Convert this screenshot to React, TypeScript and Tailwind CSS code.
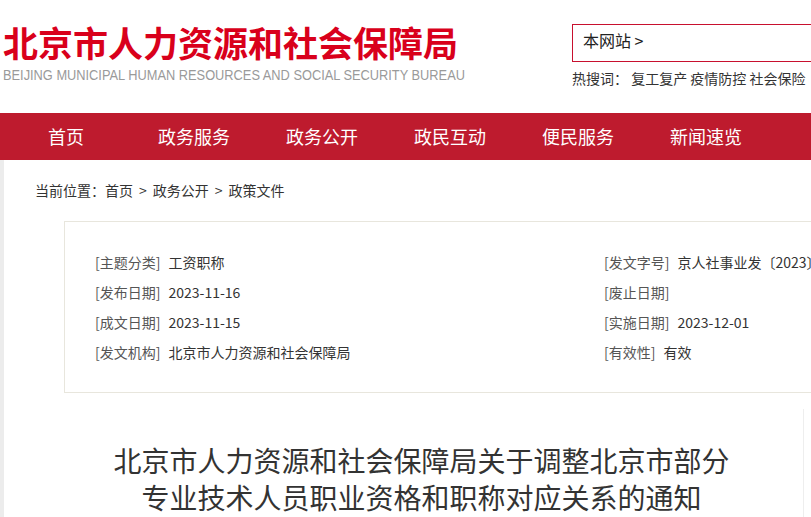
import React from 'react';

const navItems = ['首页', '政务服务', '政务公开', '政民互动', '便民服务', '新闻速览'];

const leftMeta = [
  { label: '[主题分类]', value: '工资职称' },
  { label: '[发布日期]', value: '2023-11-16' },
  { label: '[成文日期]', value: '2023-11-15' },
  { label: '[发文机构]', value: '北京市人力资源和社会保障局' },
];

const rightMeta = [
  { label: '[发文字号]', value: '京人社事业发〔2023〕' },
  { label: '[废止日期]', value: '' },
  { label: '[实施日期]', value: '2023-12-01' },
  { label: '[有效性]', value: '有效' },
];

const crumbs = ['首页', '政务公开', '政策文件'];

function MetaRow({ label, value }: { label: string; value: string }) {
  return (
    <div className="flex h-[30px] items-center gap-[8px] whitespace-nowrap text-[14px] leading-[30px]">
      <span className="text-[#555]">{label}</span>
      {value && <span className="text-[#333]">{value}</span>}
    </div>
  );
}

export default function App() {
  return (
    <div className="h-[517px] w-[811px] overflow-hidden bg-white font-['Microsoft_YaHei','Noto_Sans_CJK_SC',sans-serif] text-[#333]">
      {/* header: logo + search */}
      <header className="flex h-[113px]">
        <div className="w-[572px] shrink-0 pl-[3px] pt-[22px]">
          <h1 className="whitespace-nowrap text-[35px] font-bold leading-[40px] text-[#d9001b]">
            北京市人力资源和社会保障局
          </h1>
          <div className="mt-[5px] origin-left scale-x-[0.915] whitespace-nowrap font-['Liberation_Sans',sans-serif] text-[14px] leading-[16px] text-[#9a9a9a]">
            BEIJING MUNICIPAL HUMAN RESOURCES AND SOCIAL SECURITY BUREAU
          </div>
        </div>
        <div className="shrink-0 pt-[24px]">
          <div className="h-[38px] w-[300px] border border-[#c8102e] pl-[10px] pt-[3px] text-[16px] leading-[24px] text-[#222]">
            本网站 &gt;
          </div>
          <div className="mt-[6px] whitespace-nowrap text-[14px] leading-[20px] text-[#333]">
            热搜词：&nbsp;复工复产 疫情防控 社会保险
          </div>
        </div>
      </header>

      {/* main navigation */}
      <nav className="flex h-[47px] bg-[#be1b2e] pl-[2px]">
        {navItems.map((item) => (
          <div key={item} className="w-[128px] shrink-0 text-center text-[18px] leading-[47px] text-white">
            {item}
          </div>
        ))}
      </nav>

      <div className="flex">
        <div className="w-[4px] shrink-0 self-stretch bg-[#ececec]" />
        <main className="flex-1">
          <div className="flex pl-[31px] pt-[20px] text-[14px] leading-[20px] text-[#333]">
            <span>当前位置：</span>
            {crumbs.map((c, i) => (
              <span key={c} className="flex">
                {i > 0 && <span className="mx-[6px]">&gt;</span>}
                {c}
              </span>
            ))}
          </div>

          {/* document meta info */}
          <div className="ml-[60px] mt-[21px] box-border flex h-[172px] w-[820px] border border-[#e8e6dd] pt-[25px]">
            <div className="w-[539px] shrink-0 pl-[30px]">
              {leftMeta.map((m) => (
                <MetaRow key={m.label} {...m} />
              ))}
            </div>
            <div className="flex-1">
              {rightMeta.map((m) => (
                <MetaRow key={m.label} {...m} />
              ))}
            </div>
          </div>

          <div className="ml-[36px] mt-[16px] h-[200px] w-[764px] border-r border-[#eeeeee] pt-[33px] text-center text-[28px] leading-[37px] text-[#333]">
            <div>北京市人力资源和社会保障局关于调整北京市部分</div>
            <div>专业技术人员职业资格和职称对应关系的通知</div>
          </div>
        </main>
      </div>
    </div>
  );
}
